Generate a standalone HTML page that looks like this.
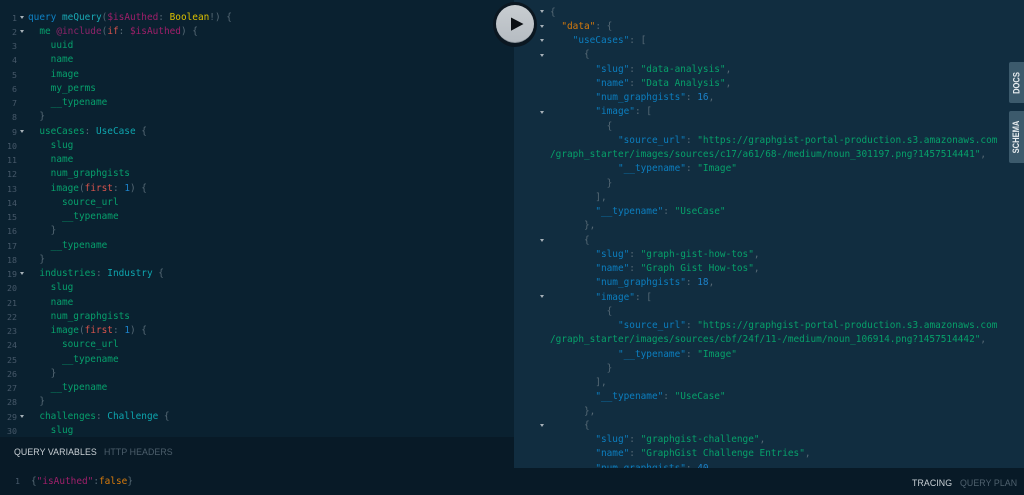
<!DOCTYPE html>
<html><head><meta charset="utf-8">
<style>
html,body{margin:0;padding:0;width:1024px;height:495px;overflow:hidden;background:#0a1d2b}
body{position:relative;font-family:"DejaVu Sans Mono","Liberation Mono",monospace}
.abs{position:absolute}
#left{left:0;top:0;width:514px;height:437px;background:#0a2130;overflow:hidden}
#right{left:514px;top:0;width:510px;height:468px;background:#112d40;overflow:hidden}
#leftbot{left:0;top:437px;width:514px;height:58px;background:#081a27}
#rightbot{left:514px;top:468px;width:510px;height:27px;background:#081a27}
pre{margin:0;font:inherit;font-size:9.42px;line-height:14.25px;white-space:pre;color:#566975}
.nums{position:absolute;left:0;top:10.5px;width:17px;text-align:right;color:#47596a;font-size:8.3px;line-height:14.25px;white-space:pre}
.k{color:#0f82c4}.d{color:#1aa8b3}.v{color:#a01f6a}.y{color:#dcc000}.f{color:#07a06c}.t{color:#0ea5ae}.i{color:#d8544c}.m{color:#8e2369}
.p{color:#0c7ebf}.o{color:#d67a0c}.s{color:#07a06a}.n{color:#1c82c9}
.ar{position:absolute;width:0;height:0;border-left:2.5px solid transparent;border-right:2.5px solid transparent;border-top:3px solid #a8b2b9}
.tab{position:absolute;left:1009px;width:15px;background:#3c5a6c;border-radius:2px 0 0 2px;color:#e8edf0;font:bold 8.8px "Liberation Sans",sans-serif;display:flex;align-items:center;justify-content:center}
.tab span{transform:rotate(-90deg) scale(.86,1);white-space:nowrap}
.lbl{position:absolute;font:8.8px "Liberation Sans",sans-serif;letter-spacing:.08px;white-space:nowrap;line-height:12px}
</style></head><body>
<div id="left" class="abs">
<div class="nums">1
2
3
4
5
6
7
8
9
10
11
12
13
14
15
16
17
18
19
20
21
22
23
24
25
26
27
28
29
30</div>
<i class="ar" style="left:20px;top:16px"></i>
<i class="ar" style="left:20px;top:30px"></i>
<i class="ar" style="left:20px;top:130px"></i>
<i class="ar" style="left:20px;top:272px"></i>
<i class="ar" style="left:20px;top:415px"></i>
<pre class="abs" style="left:28px;top:10.5px"><span class="k">query</span> <span class="d">meQuery</span>(<span class="v">$isAuthed</span>: <span class="y">Boolean</span>!) {
  <span class="f">me</span> <span class="m">@include</span>(<span class="i">if</span>: <span class="v">$isAuthed</span>) {
    <span class="f">uuid</span>
    <span class="f">name</span>
    <span class="f">image</span>
    <span class="f">my_perms</span>
    <span class="f">__typename</span>
  }
  <span class="f">useCases</span>: <span class="t">UseCase</span> {
    <span class="f">slug</span>
    <span class="f">name</span>
    <span class="f">num_graphgists</span>
    <span class="f">image</span>(<span class="i">first</span>: <span class="n">1</span>) {
      <span class="f">source_url</span>
      <span class="f">__typename</span>
    }
    <span class="f">__typename</span>
  }
  <span class="f">industries</span>: <span class="t">Industry</span> {
    <span class="f">slug</span>
    <span class="f">name</span>
    <span class="f">num_graphgists</span>
    <span class="f">image</span>(<span class="i">first</span>: <span class="n">1</span>) {
      <span class="f">source_url</span>
      <span class="f">__typename</span>
    }
    <span class="f">__typename</span>
  }
  <span class="f">challenges</span>: <span class="t">Challenge</span> {
    <span class="f">slug</span></pre>
</div>
<div id="leftbot" class="abs"></div>
<div id="rightbot" class="abs"></div>
<div class="lbl" style="left:14px;top:446px;color:#c9d0d5">QUERY VARIABLES</div>
<div class="lbl" style="left:104px;top:446px;color:#4c5e6b">HTTP HEADERS</div>
<div class="abs" style="left:15px;top:475px;color:#47596a;font-size:8.3px;line-height:12px">1</div>
<pre class="abs" style="left:31px;top:475px">{<span class="v">"isAuthed"</span>:<span class="o">false</span>}</pre>
<div id="right" class="abs">
<i class="ar" style="left:26px;top:10px"></i>
<i class="ar" style="left:26px;top:25px"></i>
<i class="ar" style="left:26px;top:39px"></i>
<i class="ar" style="left:26px;top:54px"></i>
<i class="ar" style="left:26px;top:111px"></i>
<i class="ar" style="left:26px;top:239px"></i>
<i class="ar" style="left:26px;top:295px"></i>
<i class="ar" style="left:26px;top:424px"></i>
<pre class="abs" style="left:36px;top:5.5px">{
  <span class="o">"data"</span>: {
    <span class="p">"useCases"</span>: [
      {
        <span class="p">"slug"</span>: <span class="s">"data-analysis"</span>,
        <span class="p">"name"</span>: <span class="s">"Data Analysis"</span>,
        <span class="p">"num_graphgists"</span>: <span class="n">16</span>,
        <span class="p">"image"</span>: [
          {
            <span class="p">"source_url"</span>: <span class="s">"https://graphgist-portal-production.s3.amazonaws.com</span>
<span class="s">/graph_starter/images/sources/c17/a61/68-/medium/noun_301197.png?1457514441"</span>,
            <span class="p">"__typename"</span>: <span class="s">"Image"</span>
          }
        ],
        <span class="p">"__typename"</span>: <span class="s">"UseCase"</span>
      },
      {
        <span class="p">"slug"</span>: <span class="s">"graph-gist-how-tos"</span>,
        <span class="p">"name"</span>: <span class="s">"Graph Gist How-tos"</span>,
        <span class="p">"num_graphgists"</span>: <span class="n">18</span>,
        <span class="p">"image"</span>: [
          {
            <span class="p">"source_url"</span>: <span class="s">"https://graphgist-portal-production.s3.amazonaws.com</span>
<span class="s">/graph_starter/images/sources/cbf/24f/11-/medium/noun_106914.png?1457514442"</span>,
            <span class="p">"__typename"</span>: <span class="s">"Image"</span>
          }
        ],
        <span class="p">"__typename"</span>: <span class="s">"UseCase"</span>
      },
      {
        <span class="p">"slug"</span>: <span class="s">"graphgist-challenge"</span>,
        <span class="p">"name"</span>: <span class="s">"GraphGist Challenge Entries"</span>,
        <span class="p">"num_graphgists"</span>: <span class="n">40</span>,</pre>
</div>
<div class="lbl" style="left:912px;top:477px;color:#c9d0d5">TRACING</div>
<div class="lbl" style="left:960px;top:477px;color:#4f616e">QUERY PLAN</div>
<div class="tab" style="top:62px;height:41px"><span>DOCS</span></div>
<div class="tab" style="top:111px;height:52px"><span>SCHEMA</span></div>
<div class="abs" style="left:493px;top:2px;width:44px;height:45px;border-radius:50%;background:#0b1721"></div>
<div class="abs" style="left:496px;top:5px;width:38px;height:38px;border-radius:50%;background:linear-gradient(#c8cdd1,#b6bcc2);border-bottom:1px solid #8f979e;box-sizing:border-box"></div>
<svg class="abs" style="left:510px;top:17px" width="15" height="15" viewBox="0 0 15 15"><path d="M1 0.5 L13.5 7 L1 13.8 Z" fill="#0b0f13"/></svg>
</body></html>
